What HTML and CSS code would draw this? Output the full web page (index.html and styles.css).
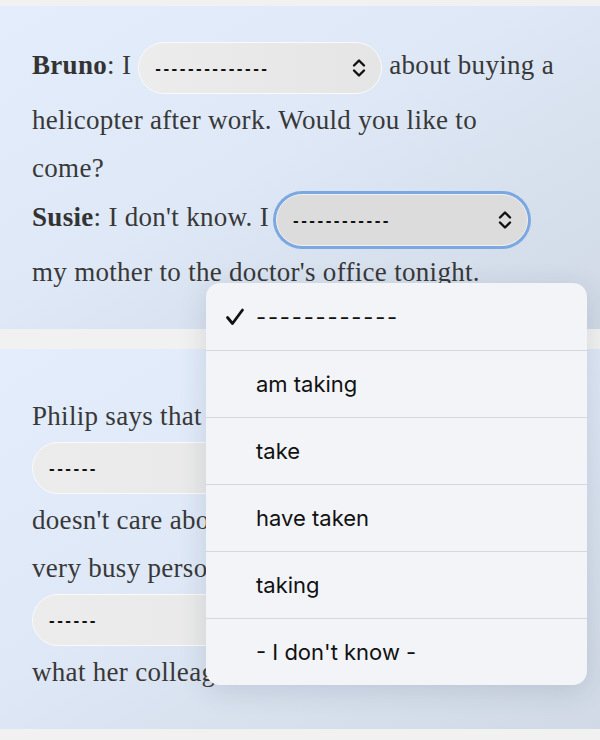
FILE: index.html
```html
<!DOCTYPE html>
<html lang="en">
<head>
<meta charset="utf-8">
<title>Exercise</title>
<link rel="stylesheet" href="styles.css">
</head>
<body>
<div class="page">
  <section class="card card-first">
    <p class="para"><b>Bruno</b>: I <span class="sel w1"><span class="dash">--------------</span><svg class="chev" width="14" height="22" viewBox="0 0 14 22"><path d="M2 8.5 L7 3.5 L12 8.5 M2 13.5 L7 18.5 L12 13.5" fill="none" stroke="#111" stroke-width="2.4" stroke-linecap="round" stroke-linejoin="round"/></svg></span> about buying a helicopter after work. Would you like to<br>come?<br><b>Susie</b>: I don't know. I <span class="sel w2 focus"><span class="dash">------------</span><svg class="chev" width="14" height="22" viewBox="0 0 14 22"><path d="M2 8.5 L7 3.5 L12 8.5 M2 13.5 L7 18.5 L12 13.5" fill="none" stroke="#111" stroke-width="2.4" stroke-linecap="round" stroke-linejoin="round"/></svg></span><br>my mother to the doctor's office tonight.</p>
  </section>
  <section class="card card-second">
    <p class="para">Philip says that <span class="sel w3"><span class="dash">------</span><svg class="chev" width="14" height="22" viewBox="0 0 14 22"><path d="M2 8.5 L7 3.5 L12 8.5 M2 13.5 L7 18.5 L12 13.5" fill="none" stroke="#111" stroke-width="2.4" stroke-linecap="round" stroke-linejoin="round"/></svg></span><br>doesn't care about his job. Maria is a<br>very busy person and she <span class="sel w3"><span class="dash">------</span><svg class="chev" width="14" height="22" viewBox="0 0 14 22"><path d="M2 8.5 L7 3.5 L12 8.5 M2 13.5 L7 18.5 L12 13.5" fill="none" stroke="#111" stroke-width="2.4" stroke-linecap="round" stroke-linejoin="round"/></svg></span><br>what her colleagues think.</p>
  </section>

  <div class="menu">
    <div class="opt checked"><svg class="check" width="20" height="20" viewBox="0 0 20 20"><path d="M2.5 10.5 L7.5 16.5 L17.5 3" fill="none" stroke="#111" stroke-width="2.8" stroke-linecap="round" stroke-linejoin="round"/></svg><span class="opt-dash">------------</span></div>
    <div class="opt">am taking</div>
    <div class="opt">take</div>
    <div class="opt">have taken</div>
    <div class="opt">taking</div>
    <div class="opt">- I don't know -</div>
  </div>
</div>
</body>
</html>
```

FILE: styles.css
```css
html, body {
  margin: 0;
  padding: 0;
}

body {
  background: #f1f1f1;
  width: 600px;
  height: 740px;
  overflow: hidden;
}

.page {
  position: relative;
  padding-top: 6px;
  display: flex;
  flex-direction: column;
  gap: 20px;
}

.card {
  background: linear-gradient(150deg, #e3edfc 0%, #dee8f6 45%, #d0d9e5 100%);
  padding: 34px 32px 33px;
}

.card-second {
  padding-top: 43px;
}

.para {
  margin: 0;
  font-family: "Liberation Serif", "DejaVu Serif", serif;
  font-size: 27px;
  letter-spacing: 0.3px;
  line-height: 48px;
  color: #383838;
}

.para b {
  font-weight: 700;
  color: #333;
}

.sel {
  display: inline-flex;
  align-items: center;
  justify-content: space-between;
  box-sizing: border-box;
  height: 52px;
  margin: 2px 0;
  padding: 0 15px 0 16px;
  border: 1.5px solid #fafafa;
  border-radius: 26px;
  background: linear-gradient(90deg, #ececec, #e5e5e5);
  vertical-align: middle;
  line-height: 1;
  letter-spacing: 0;
}

.w1 { width: 244px; }
.w2 { width: 252px; }
.w3 { width: 500px; }

.focus {
  background: #dcdcdc;
  box-shadow: 0 0 0 3px #7ca8e1;
  border-color: #f0f0f0;
}

.dash {
  font-family: "Liberation Sans", Arial, sans-serif;
  font-size: 17px;
  font-weight: 700;
  letter-spacing: 2.5px;
  color: #111;
}

.chev {
  display: block;
  flex: none;
}

.menu {
  position: absolute;
  left: 206px;
  top: 283px;
  width: 381px;
  border-radius: 14px;
  background: #f2f4f8;
  box-shadow: 0 6px 28px rgba(40, 50, 70, 0.14);
  overflow: hidden;
}

.opt {
  display: flex;
  align-items: center;
  height: 67px;
  box-sizing: border-box;
  padding-left: 50px;
  position: relative;
  font-family: Inter, "Noto Sans", sans-serif;
  font-size: 22px;
  color: #111;
  border-top: 1px solid #d5d7dc;
}

.opt:first-child {
  border-top: none;
}

.check {
  position: absolute;
  left: 19px;
  top: 24px;
}

.opt-dash {
  letter-spacing: 1.8px;
}
```
